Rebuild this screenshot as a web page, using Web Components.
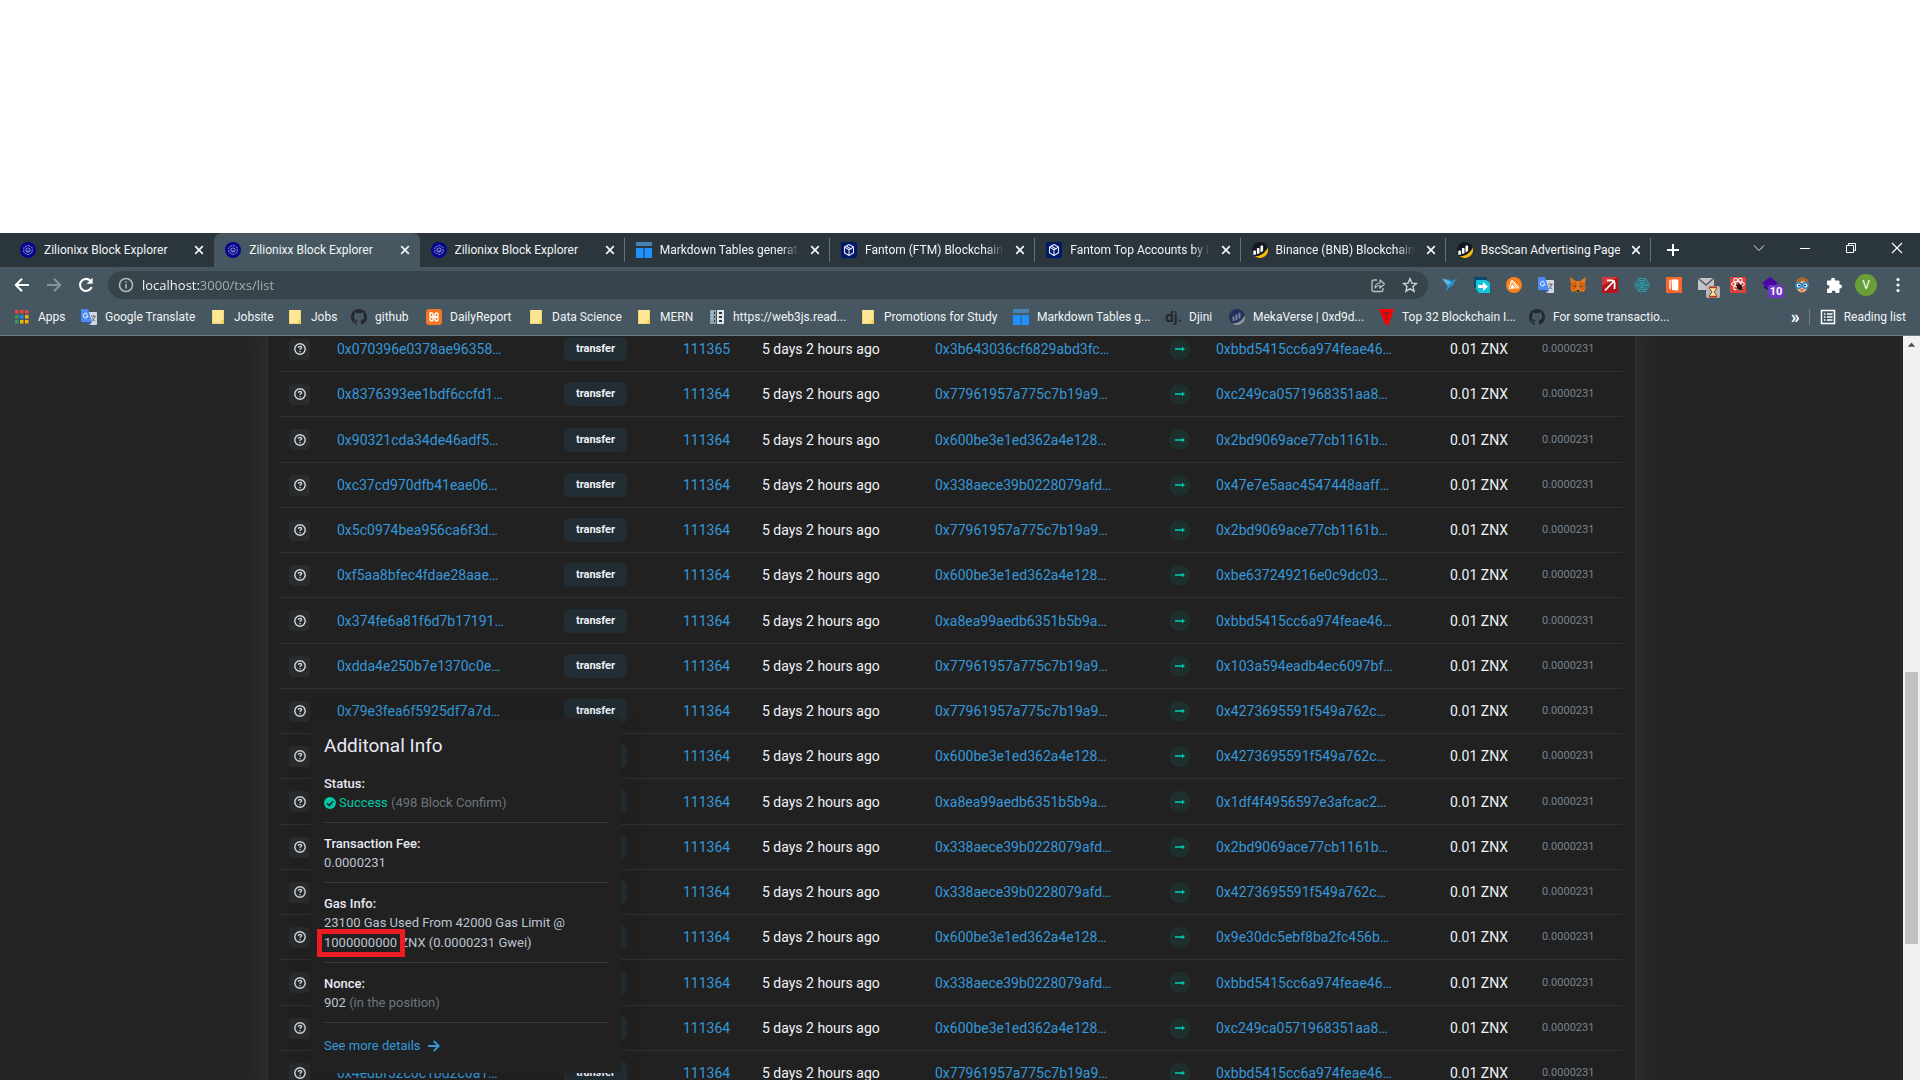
<!DOCTYPE html>
<html lang="en">
<head>
<meta charset="utf-8">
<title>Zilionixx Block Explorer</title>
<style>
  html, body { margin: 0; height: 100%; background: #fff; }
  body { overflow: hidden; font-family: Roboto, "Noto Sans", sans-serif; }
</style>
</head>
<body>
<browser-window></browser-window>
<script>
const ICONS = {
  zx: ['0 0 16 16', '<circle cx="8" cy="8" r="8" fill="#06068c"/><g fill="none" stroke="#9aa0d8" stroke-width=".9"><path d="M8 3.2l4.2 2.4v4.8L8 12.8l-4.200-2.400V5.600z" stroke-dasharray="2.400 .8"/><path d="M8 5.800l2 1.100v2.200l-2 1.100-2-1.100V6.900z"/><path d="M8 8v2.500"/></g>'],
  table: ['0 0 16 16', '<path fill="#4682b4" d="M0 0h16v4H0z"/><path fill="#1e90ff" d="M0 6h7.500v10H0zM8.500 6H16v10H8.500z"/>'],
  cube: ['0 0 16 16', '<rect width="16" height="16" rx="2" fill="#001868"/><g fill="none" stroke="#e4e8f6" stroke-width="1.100" stroke-linejoin="round"><path d="M8 2.500l4.500 2.600v5.600L8 13.500l-4.500-2.800V5.100z"/><path d="M3.500 5.100L8 7.800l4.500-2.700M8 7.800v5.700M5.500 4.200l5 3"/></g>'],
  bsc: ['0 0 16 16', '<circle cx="8" cy="8" r="8" fill="#15171f"/><path d="M15.700 5.800A8 8 0 0 1 2.800 14C9 14.500 12.500 11 15.700 5.800z" fill="#f0b90b"/><g fill="#fff"><path d="M1.300 12.400V9.200c0-.5.4-.8.800-.8h1c.5 0 .8.300.8.800v3.200c-.9.500-1.700.6-2.600 0z"/><path d="M4.900 12V6.800c0-.5.3-.8.800-.8h1c.5 0 .8.300.8.800v4.400c-.8.500-1.700.8-2.600.8z"/><path d="M8.500 10.600V4.400c0-.5.3-.8.800-.8h1c.5 0 .8.300.8.800v4.400c-.8.800-1.700 1.400-2.600 1.800z"/></g>'],
  meka: ['0 0 16 16', '<circle cx="8" cy="8" r="8" fill="#21325b"/><path d="M15.900 6.500A8 8 0 0 1 3.200 14.400C9.500 14.500 13 11.500 15.900 6.500z" fill="#979695"/><g fill="#75829d"><path d="M3.500 12V7.600h2V12zM6.500 11.500V5.600h2v5.200zM9.500 10V3.800h2v4.900z"/></g>'],
  close: ['0 0 10 10', '<path d="M1.200 1.200l7.600 7.600M8.800 1.200L1.200 8.800" stroke="#f2f4f5" stroke-width="1.700"/>'],
  plus: ['0 0 12 12', '<path d="M6 0v12M0 6h12" stroke="#fff" stroke-width="2"/>'],
  chevron: ['0 0 12 12', '<path d="M1 3.500l5 5 5-5" fill="none" stroke="#eee" stroke-width="1"/>'],
  min: ['0 0 12 12', '<path d="M1 6.500h10" stroke="#fff"/>'],
  restore: ['0 0 12 12', '<path d="M1.500 3.500h7v7h-7zM3.500 3.500v-2h7v7h-2" fill="none" stroke="#fff"/>'],
  winclose: ['0 0 12 12', '<path d="M1 1l10 10M11 1L1 11" stroke="#fff" stroke-width="1.100"/>'],
  back: ['0 0 16 16', '<path d="M15 8H2M8 1.800L1.800 8 8 14.200" fill="none" stroke="#fff" stroke-width="2"/>'],
  forward: ['0 0 16 16', '<path d="M1 8h13M8 1.800L14.200 8 8 14.200" fill="none" stroke="#87939a" stroke-width="2"/>'],
  reload: ['0 0 16 16', '<path d="M13.600 10.200A6 6 0 1 1 12.600 4" fill="none" stroke="#fff" stroke-width="2.100"/><path d="M14.600 .8v6H8.600z" fill="#fff"/>'],
  info: ['0 0 16 16', '<g fill="none" stroke="#b4bcc0" stroke-width="1.500"><circle cx="8" cy="8" r="6.500"/><path d="M8 7v4.500M8 4.300v1.500"/></g>'],
  share: ['0 0 16 16', '<path d="M7 3H4Q2 3 2 5v7.500q0 2 2 2h7q2 0 2-2V11" fill="none" stroke="#b9c0c4" stroke-width="1.300"/><path d="M5 11c.3-3.500 2-5 5-5V3l4.500 4-4.500 4V8.500C8 8.500 6.500 9 5 11z" fill="none" stroke="#b9c0c4" stroke-width="1.200" stroke-linejoin="round"/>'],
  star: ['0 0 16 16', '<path d="M8 1.800l1.900 4.300 4.600.4-3.500 3.100 1 4.600L8 11.800l-4 2.400 1-4.600L1.500 6.500l4.600-.4z" fill="none" stroke="#cfd4d7" stroke-width="1.400"/>'],
  bird: ['0 0 16 16', '<path d="M0 1.500l7 1.200 2.500 2L12 2.500h4l-3.500 1.800C12 8 9.500 10 7.500 10.500L4 14.500l1.500-6z" fill="#2f92cf"/><path d="M0 1.500l9.500 3.200L5.500 8.500z" fill="#5cb8e8"/>'],
  doc: ['0 0 16 16', '<path d="M0 0h13v11H0z" fill="#0a4a6b"/><path d="M2 3h10l4 3v10H5l-3-4z" fill="#10c5dc"/><path d="M4 8h5V5l5 4.500L9 14v-3H4z" fill="#fff"/>'],
  avast: ['0 0 16 16', '<circle cx="8" cy="8" r="8" fill="#f9801c"/><path d="M2.500 12l2.500-8.500q1-1 2 0L13 10q.5 1.500-1 1.500z" fill="#fff"/><path d="M3.500 12.500L6 6l4 6.500M6 4.500l6 7" fill="none" stroke="#f9801c" stroke-width=".9"/>'],
  gtrans: ['0 0 16 16', '<path d="M6 3h9q1 0 1 1v11q0 1-1 1H8.500z" fill="#d5d7da"/><path d="M1 0h6l4 13H1q-1 0-1-1V1q0-1 1-1z" fill="#4c8bf5"/><path d="M8 13h3l-2.400 3z" fill="#2b59c3"/><path d="M6.600 5.300A2.300 2.300 0 1 0 7 7H5" fill="none" stroke="#fff"/><path d="M10.200 7.300h4.600M12.500 6v1.300M11 12q2.500-2 2.800-4.500M11 9q1 2 3.300 3" fill="none" stroke="#6b7480"/>'],
  fox: ['0 0 16 16', '<path d="M0 0l6 4h4l6-4-1 7 .7 4-1.700 4-3.500-1-1.500 1.500H7L5.500 14 2 15 .3 11 1 7z" fill="#e2761b"/><path d="M1 7l5-3 1 5-3 4-3.700-2zM15 7l-5-3-1 5 3 4 3.700-2z" fill="#cd6116"/><path d="M4 8.500l2.200.6-.9 1.200zM12 8.500l-2.200.6.9 1.200z" fill="#23344a"/><path d="M6.500 13h3L9 15H7z" fill="#2b2b2b"/>'],
  pick: ['0 0 16 16', '<path d="M0 0h16v16H0z" fill="#b3151a"/><path d="M0 0h16L0 9z" fill="#d9353a"/><path d="M3 13.500l8.500-9M5 3.500q6-.500 7 .5 1 1.500.5 8" fill="none" stroke="#fff" stroke-width="1.800"/>'],
  web: ['0 0 16 16', '<g fill="none" stroke="#2a9aa8" stroke-width="1"><path d="M4.500 1.500h7L15.500 8l-4 6.500h-7L.5 8z"/><path d="M5.500 3.500h5L13.200 8l-2.700 4.500h-5L2.800 8z"/><path d="M6.500 5.500h3L11 8l-1.500 2.500h-3L5 8z"/><path d="M4.500 1.500l7 13M11.500 1.500l-7 13M.5 8h15"/></g>'],
  cards: ['0 0 16 16', '<path d="M0 0h16v16H0z" fill="#f7682b"/><path d="M3 3.500l2-1v10l-2-1z" fill="#fcd2bf"/><path d="M5.500 2.500h6.800v11l-6.300-.5z" fill="#fff"/>'],
  mail: ['0 0 16 16', '<path d="M0 1h16v12H0z" fill="#c3c5c7"/><path d="M0 1l8 7 8-7" fill="none" stroke="#4f5a60" stroke-width="1.500"/>'],
  hourglass: ['0 0 14 12', '<rect width="14" height="12" rx="2" fill="#b7b7b7"/><path d="M3.500 1h7v1.500L8 6l2.500 3.500V11h-7V9.500L6 6 3.500 2.500z" fill="#ffe9a0" stroke="#6b2a14" stroke-width=".8"/><path d="M3 .8h8v1.400H3zM3 9.800h8v1.400H3z" fill="#c0391c"/>'],
  bug: ['0 0 16 16', '<path d="M0 0h16v16H0z" fill="#d9433b"/><g fill="none" stroke="#fff" stroke-width="1"><ellipse cx="8" cy="7" rx="6.500" ry="2.500"/><ellipse cx="8" cy="7" rx="6.500" ry="2.500" transform="rotate(60 8 7)"/><ellipse cx="8" cy="7" rx="6.500" ry="2.500" transform="rotate(120 8 7)"/></g><ellipse cx="9.500" cy="10" rx="2.500" ry="3.300" fill="#2a1513" transform="rotate(-35 9.500 10)"/><path d="M6 8l7 5M6.500 12.500l6-5" stroke="#2a1513"/>'],
  purple: ['0 0 16 16', '<path d="M8 0l8 6-8 6-8-6z" fill="#4a06a8"/><path d="M2 8l6 4.500L14 8v3l-6 3-6-3z" fill="#3a0688"/>'],
  face: ['0 0 16 16', '<path d="M2 8q-1-6 5-7.500Q14 0 14.500 6v4H2z" fill="#a8692c"/><ellipse cx="8" cy="9.500" rx="5.500" ry="6" fill="#f0b07a"/><path d="M2 6q5-1 8-3.500Q12 6 14.500 6L13 1.500 7 .5 3 2z" fill="#a8692c"/><circle cx="4.600" cy="8.500" r="2.700" fill="#fff" stroke="#1e88d2" stroke-width="1.500"/><circle cx="11.400" cy="8.500" r="2.700" fill="#fff" stroke="#1e88d2" stroke-width="1.500"/><circle cx="5" cy="8.500" r="1" fill="#223"/><circle cx="11" cy="8.500" r="1" fill="#223"/><path d="M6.500 13h3" stroke="#a33"/>'],
  puzzle: ['0 0 16 16', '<path d="M5 2.800a2 2 0 0 1 4 0V3.500h3.500q1 0 1 1V7.500h.5a2 2 0 0 1 0 4h-.5V15q0 1-1 1H9.500v-.6a1.900 1.900 0 0 0-3.800 0V16H2q-1 0-1-1v-3.300h.6a1.900 1.900 0 0 0 0-3.800H1V4.500q0-1 1-1h3z" fill="#fff"/>'],
  dots: ['0 0 16 16', '<g fill="#fff"><circle cx="8" cy="2.500" r="1.600"/><circle cx="8" cy="8" r="1.600"/><circle cx="8" cy="13.500" r="1.600"/></g>'],
  apps: ['0 0 16 16', '<path fill="#ee4236" d="M1 1h3.500v3.500H1zM6 1h3.500v3.500H6zM11 1h3.500v3.500H11z"/><path fill="#2f9e51" d="M1 6h3.500v3.500H1zM1 11h3.500v3.500H1z"/><path fill="#1e88ee" d="M6 6h3.500v3.500H6z"/><path fill="#f5b400" d="M11 6h3.500v3.500H11zM6 11h3.500v3.500H6zM11 11h3.500v3.500H11z"/>'],
  folder: ['0 0 16 16', '<path d="M2 1h12v14H2z" fill="#ffe694"/><path d="M2 1h1v14H2zM2 14h12v1H2zM13 1h1v10h-1z" fill="#f3d573"/><path d="M11.500 11H14v4h-2.500z" fill="#f4cd4d"/>'],
  github: ['0 0 16 16', '<path d="M8 0C3.580 0 0 3.580 0 8c0 3.540 2.290 6.530 5.470 7.590.4.070.55-.17.55-.38v-1.490c-2.230.48-2.690-.94-2.690-.94-.36-.92-.89-1.170-.89-1.170-.73-.5.050-.49.050-.49.810.060 1.230.83 1.230.83.720 1.230 1.880.87 2.340.67.070-.52.280-.87.510-1.070-1.780-.2-3.640-.89-3.640-3.950 0-.87.310-1.590.82-2.150-.08-.2-.36-1.020.08-2.120 0 0 .67-.21 2.200.82A7.600 7.600 0 0 1 8 3.900c.68 0 1.360.09 2 .27 1.530-1.040 2.200-.82 2.200-.82.440 1.100.16 1.920.08 2.120.51.56.82 1.270.82 2.150 0 3.070-1.870 3.750-3.650 3.950.29.25.54.73.54 1.480v2.160c0 .21.150.46.550.38A8 8 0 0 0 16 8c0-4.420-3.580-8-8-8z" fill="#24292e"/>'],
  xampp: ['0 0 16 16', '<rect width="16" height="16" rx="3" fill="#f37623"/><path d="M4 4v2.500Q4 8 5.500 8h5Q12 8 12 6.500V5q0-1-1.500-1T9 5.500v5q0 1.500 1.500 1.500T12 11V9.500Q12 8 10.500 8h-5Q4 8 4 9.500V11q0 1 1.500 1T7 10.500v-5Q7 4 5.500 4H4z" fill="none" stroke="#fff" stroke-width="1.400"/>'],
  docs: ['0 0 16 16', '<path d="M1 1h6v14H1z" fill="#8ca1af"/><path d="M8 1h7v14H8z" fill="#e4e8ea"/><path d="M2 3h2M2 6h2M2 9h2" stroke="#dde3e7"/><path d="M10 4h3M10 8h3M10 12h3M5 4h1M5 8h1M5 12h1" stroke="#2a3337" stroke-width="1.800"/>'],
  tri: ['0 0 16 16', '<path d="M1 0h15l-5.500 16h-3z" fill="#f00"/><path d="M5 4h7M8.500 4v7" stroke="#6f2a30" stroke-width="1.300"/>'],
  list: ['0 0 16 16', '<path d="M1.500 1.500h13v13h-13z" fill="none" stroke="#fff" stroke-width="1.500"/><path d="M4 5h1.500M7 5h5.500M4 8h1.500M7 8h5.500M4 11h1.500M7 11h5.500" stroke="#fff" stroke-width="1.600"/>'],
  question: ['0 0 12 12', '<circle cx="6" cy="6" r="5.200" fill="none" stroke="#d4dce1" stroke-width="1.400"/><path d="M4.300 4.800q.2-1.500 1.800-1.500 1.600.1 1.600 1.300 0 .9-1.700 1.700v.5M6 8v1.300" fill="none" stroke="#d4dce1" stroke-width="1.300"/>'],
  arrow: ['0 0 12 12', '<path d="M1 6h8" stroke="#00c9a7" stroke-width="1.600"/><path d="M8 3.700L11 6 8 8.300z" fill="#00c9a7"/>'],
  check: ['0 0 12 12', '<circle cx="6" cy="6" r="6" fill="#00c9a7"/><path d="M3 6.300l2.200 2.200L9.200 4" fill="none" stroke="#212121" stroke-width="1.600"/>'],
  more: ['0 0 12 12', '<path d="M0 6h10.500M5.800 1l5 5-5 5" fill="none" stroke="#3498db" stroke-width="1.800"/>'],
  up: ['0 0 16 16', '<path d="M4.500 10L8 6l3.500 4z" fill="#505050"/>']
};

class XIcon extends HTMLElement {
  connectedCallback() {
    const [box, body] = ICONS[this.getAttribute('name')];
    const size = this.getAttribute('size') || 16;
    this.attachShadow({ mode: 'open' }).innerHTML =
      `<style>:host{display:block;flex:none;width:${size}px}svg{display:block;width:100%}</style>
       <svg viewBox="${box}" aria-hidden="true">${body}</svg>`;
  }
}
customElements.define('x-icon', XIcon);

class BrowserTab extends HTMLElement {
  connectedCallback() {
    this.attachShadow({ mode: 'open' }).innerHTML = `
      <style>
        :host { display: flex; align-items: center; gap: 8px; min-width: 0; height: 34px; padding: 0 7px 0 11px; box-sizing: border-box; color: #f2f4f5; font-size: 12px; line-height: 16px;
          background: linear-gradient(#657279, #657279) right center / 1px 24px no-repeat; }
        :host([plain]) { background: none; }
        :host([active]) { background: #465761; border-radius: 8px 8px 0 0; }
        span { flex: 1; min-width: 0; overflow: hidden; white-space: nowrap; }
        :host([fade]) span { -webkit-mask-image: linear-gradient(to right, #000 calc(100% - 18px), transparent); mask-image: linear-gradient(to right, #000 calc(100% - 18px), transparent); }
        button { all: unset; display: grid; place-items: center; width: 16px; height: 16px; }
      </style>
      <x-icon name="${this.getAttribute('icon')}"></x-icon><span><slot></slot></span>
      <button aria-label="Close tab"><x-icon name="close" size="10"></x-icon></button>`;
  }
}
customElements.define('browser-tab', BrowserTab);

class TabStrip extends HTMLElement {
  connectedCallback() {
    this.attachShadow({ mode: 'open' }).innerHTML = `
      <style>
        :host { display: flex; height: 34px; background: #2b363c; padding-left: 9px; }
        .tabs { flex: 1; display: grid; grid-template-columns: repeat(8, minmax(0, 1fr)); }
        button { all: unset; display: grid; place-items: center; width: 44px; height: 34px; }
        .caption { display: flex; height: 30px; margin-left: 41px; }
        .caption button { width: 46px; height: 30px; }
      </style>
      <div class="tabs">
        <browser-tab icon="zx" plain>Zilionixx Block Explorer</browser-tab>
        <browser-tab icon="zx" active>Zilionixx Block Explorer</browser-tab>
        <browser-tab icon="zx">Zilionixx Block Explorer</browser-tab>
        <browser-tab icon="table" fade>Markdown Tables generator</browser-tab>
        <browser-tab icon="cube" fade>Fantom (FTM) Blockchain Explorer</browser-tab>
        <browser-tab icon="cube" fade>Fantom Top Accounts by FTM</browser-tab>
        <browser-tab icon="bsc" fade>Binance (BNB) Blockchain Explorer</browser-tab>
        <browser-tab icon="bsc">BscScan Advertising Page</browser-tab>
      </div>
      <button aria-label="New tab"><x-icon name="plus" size="12"></x-icon></button>
      <div class="caption">
        <button aria-label="Search tabs"><x-icon name="chevron" size="12"></x-icon></button>
        <button aria-label="Minimize"><x-icon name="min" size="12"></x-icon></button>
        <button aria-label="Restore"><x-icon name="restore" size="12"></x-icon></button>
        <button aria-label="Close"><x-icon name="winclose" size="12"></x-icon></button>
      </div>`;
  }
}
customElements.define('tab-strip', TabStrip);

class ToolBar extends HTMLElement {
  connectedCallback() {
    const ext = ['bird', 'doc', 'avast', 'gtrans', 'fox', 'pick', 'web', 'cards', 'mail', 'bug', 'purple', 'face', 'puzzle'];
    const badge = { mail: '<x-icon class="hg" name="hourglass" size="14"></x-icon>', purple: '<b>10</b>' };
    this.attachShadow({ mode: 'open' }).innerHTML = `
      <style>
        :host { display: flex; align-items: center; height: 36px; padding: 0 6px; }
        button { all: unset; position: relative; display: grid; place-items: center; width: 32px; height: 28px; flex: none; }
        .url { flex: 1; display: flex; align-items: center; height: 28px; margin: 0 6px; border-radius: 14px; background: #38444b; padding: 0 2px 0 10px; }
        .url input { flex: 1; min-width: 0; margin: 0 8px; padding: 0; border: 0; outline: 0; height: 20px; font: 13px/20px "Open Sans", sans-serif;
          background: linear-gradient(to right, #fff 58px, #aab2b6 58px); -webkit-background-clip: text; background-clip: text; -webkit-text-fill-color: transparent; }
        b { position: absolute; left: 14px; top: 14px; width: 16px; height: 13px; border-radius: 2px; background: #6f35c4; color: #fff; font: 700 11px/13px Roboto, sans-serif; text-align: center; }
        .hg { position: absolute; left: 16px; top: 15px; }
        .avatar span { width: 22px; height: 22px; border-radius: 50%; background: #689f38; color: #fff; font: 12px/22px Roboto, sans-serif; text-align: center; }
      </style>
      <button aria-label="Back"><x-icon name="back"></x-icon></button>
      <button aria-label="Forward"><x-icon name="forward"></x-icon></button>
      <button aria-label="Reload"><x-icon name="reload"></x-icon></button>
      <div class="url"><x-icon name="info"></x-icon><input aria-label="Address" value="localhost:3000/txs/list">
        <button aria-label="Share"><x-icon name="share"></x-icon></button>
        <button aria-label="Bookmark"><x-icon name="star"></x-icon></button></div>
      ${ext.map(n => `<button aria-label="${n}"><x-icon name="${n}"></x-icon>${badge[n] || ''}</button>`).join('')}
      <button class="avatar" aria-label="Profile"><span>V</span></button>
      <button aria-label="Menu"><x-icon name="dots"></x-icon></button>`;
  }
}
customElements.define('tool-bar', ToolBar);

class BookmarkItem extends HTMLElement {
  connectedCallback() {
    const icon = this.getAttribute('icon');
    this.attachShadow({ mode: 'open' }).innerHTML = `
      <style>
        :host { display: block; min-width: 0; }
        a { display: flex; align-items: center; gap: 8px; color: #f2f4f5; text-decoration: none; font-size: 12px; line-height: 16px; white-space: nowrap; }
        i { width: 16px; font: 700 14px/16px Inter, sans-serif; color: #24292e; }
      </style>
      <a href="#">${icon === 'dj' ? '<i>dj.</i>' : `<x-icon name="${icon}"></x-icon>`}<span><slot></slot></span></a>`;
  }
}
customElements.define('bookmark-item', BookmarkItem);

class BookmarksBar extends HTMLElement {
  connectedCallback() {
    const marks = [['apps', 'Apps', 67], ['gtrans', 'Google Translate', 129], ['folder', 'Jobsite', 77], ['folder', 'Jobs', 64], ['github', 'github', 75], ['xampp', 'DailyReport', 102], ['folder', 'Data Science', 108], ['folder', 'MERN', 73], ['docs', 'https://web3js.read...', 151], ['folder', 'Promotions for Study', 153], ['table', 'Markdown Tables g...', 152], ['dj', 'Djini', 64], ['meka', 'MekaVerse | 0xd9d...', 149], ['tri', 'Top 32 Blockchain I...', 151], ['github', 'For some transactio...', 140]];
    this.attachShadow({ mode: 'open' }).innerHTML = `
      <style>
        :host { display: flex; align-items: center; height: 28px; padding: 0 14px 4px; border-bottom: 1px solid #6d7c84; }
        nav { flex: 1; display: grid; grid-template-columns: ${marks.map(m => m[2] + 'px').join(' ')}; }
        button { all: unset; width: 18px; color: #fff; font: 700 18px/16px Roboto, sans-serif; }
        hr { width: 1px; height: 16px; border: 0; margin: 0 10px 0 0; background: #71808a; }
      </style>
      <nav aria-label="Bookmarks">${marks.map(m => `<bookmark-item icon="${m[0]}">${m[1]}</bookmark-item>`).join('')}</nav>
      <button aria-label="More bookmarks">»</button><hr>
      <bookmark-item icon="list">Reading list</bookmark-item>`;
  }
}
customElements.define('bookmarks-bar', BookmarksBar);

const A = '0x77961957a775c7b19a9…', B = '0x600be3e1ed362a4e128…', C = '0x338aece39b0228079afd…', D = '0xa8ea99aedb6351b5b9a…';
const P = '0xbbd5415cc6a974feae46…', Q = '0xc249ca0571968351aa8…', R = '0x2bd9069ace77cb1161b…', S = '0x4273695591f549a762c…';
const ROWS = [
  ['0x070396e0378ae96358…', 111365, '0x3b643036cf6829abd3fc…', P],
  ['0x8376393ee1bdf6ccfd1…', 111364, A, Q],
  ['0x90321cda34de46adf5…', 111364, B, R],
  ['0xc37cd970dfb41eae06…', 111364, C, '0x47e7e5aac4547448aaff…'],
  ['0x5c0974bea956ca6f3d…', 111364, A, R],
  ['0xf5aa8bfec4fdae28aae…', 111364, B, '0xbe637249216e0c9dc03…'],
  ['0x374fe6a81f6d7b17191…', 111364, D, P],
  ['0xdda4e250b7e1370c0e…', 111364, A, '0x103a594eadb4ec6097bf…'],
  ['0x79e3fea6f5925df7a7d…', 111364, A, S],
  ['', 111364, B, S],
  ['', 111364, D, '0x1df4f4956597e3afcac2…'],
  ['', 111364, C, R],
  ['', 111364, C, S],
  ['', 111364, B, '0x9e30dc5ebf8ba2fc456b…'],
  ['', 111364, C, P],
  ['', 111364, B, Q],
  ['0x4edbf52c0c1bd2c0a1…', 111364, A, P]
];

class TxTable extends HTMLElement {
  connectedCallback() {
    const cols = [57, 227, 119, 79, 173, 234, 47, 234, 92, 81];
    this.attachShadow({ mode: 'open' }).innerHTML = `
      <style>
        :host { display: block; }
        table { width: 100%; table-layout: fixed; border-collapse: separate; border-spacing: 0; }
        td { height: 44px; padding: 0; border-bottom: 1px solid #303030; white-space: nowrap; font-size: 14px; line-height: 20px; color: #f0f3f8; }
        tr:nth-child(4n+3) td { height: 45px; }
        td:first-child { padding-left: 9px; }
        a { color: #3498db; text-decoration: none; }
        button { all: unset; display: grid; place-items: center; width: 21px; height: 21px; border-radius: 4px; background: #292b2c; }
        .badge { display: inline-block; padding: 4px 12px; border-radius: 5px; background: #222c33; font-weight: 700; font-size: 11px; line-height: 16px; }
        .dir { display: grid; place-items: center; width: 21px; height: 21px; border-radius: 50%; background: #1e302d; }
        .fee { font-size: 11px; color: #77838f; }
      </style>
      <table><colgroup>${cols.map(c => `<col style="width:${c}px">`).join('')}</colgroup><tbody>
      ${ROWS.map(r => `<tr><td><button aria-label="Additional info"><x-icon name="question" size="12"></x-icon></button></td>
        <td><a href="#">${r[0]}</a></td><td><span class="badge">transfer</span></td><td><a href="#">${r[1]}</a></td>
        <td>5 days 2 hours ago</td><td><a href="#">${r[2]}</a></td><td><div class="dir"><x-icon name="arrow" size="12"></x-icon></div></td>
        <td><a href="#">${r[3]}</a></td><td>0.01 ZNX</td><td class="fee">0.0000231</td></tr>`).join('')}
      </tbody></table>`;
  }
}
customElements.define('tx-table', TxTable);

class InfoPopover extends HTMLElement {
  connectedCallback() {
    this.attachShadow({ mode: 'open' }).innerHTML = `
      <style>
        :host { display: block; box-sizing: border-box; width: 310px; padding: 13px; border-radius: 5px; background: #212121; color: #bdc5d1; font-size: 13px; line-height: 19px; box-shadow: 0 0 24px rgba(0,0,0,.12); }
        h3 { margin: 0 0 13px; font-weight: 400; font-size: 19px; line-height: 30px; color: #e7eaf3; }
        section { margin-bottom: 11px; padding-bottom: 9px; border-bottom: 1px solid #3a3a3a; }
        strong { display: block; font-weight: 500; color: #e7eaf3; }
        p { margin: 0; line-height: 20px; }
        .row { display: flex; align-items: center; gap: 3px; }
        .ok { color: #00c9a7; }
        .muted { color: #6c757d; }
        .mark { position: relative; }
        .mark::after { content: ""; position: absolute; inset: -6px -8px -7px -7px; border: 5px solid #ed1c24; }
        a { display: flex; align-items: center; gap: 7px; padding: 2px 0 5px; color: #3498db; text-decoration: none; }
      </style>
      <h3>Additonal Info</h3>
      <section><strong>Status:</strong><p class="row"><x-icon name="check" size="12"></x-icon><span class="ok">Success <span class="muted">(498 Block Confirm)</span></span></p></section>
      <section><strong>Transaction Fee:</strong><p>0.0000231</p></section>
      <section><strong>Gas Info:</strong><p>23100 Gas Used From 42000 Gas Limit @ <span class="mark">1000000000</span> ZNX (0.0000231 Gwei)</p></section>
      <section><strong>Nonce:</strong><p>902 <span class="muted">(in the position)</span></p></section>
      <a href="#">See more details <x-icon name="more" size="12"></x-icon></a>`;
  }
}
customElements.define('info-popover', InfoPopover);

class PageScrollbar extends HTMLElement {
  connectedCallback() {
    this.attachShadow({ mode: 'open' }).innerHTML = `
      <style>
        :host { display: flex; flex-direction: column; width: 17px; background: #f1f1f1; }
        .thumb { height: 272px; margin: 319px 2px 0; background: #c1c1c1; }
      </style>
      <x-icon name="up" size="17"></x-icon><div class="thumb"></div>`;
  }
}
customElements.define('page-scrollbar', PageScrollbar);

class BrowserWindow extends HTMLElement {
  connectedCallback() {
    this.attachShadow({ mode: 'open' }).innerHTML = `
      <style>
        :host { display: flex; flex-direction: column; box-sizing: border-box; height: 100vh; padding-top: 233px; }
        .chrome { flex: none; background: #465761; }
        .view { flex: 1; min-height: 0; display: flex; }
        main { flex: 1; min-width: 0; overflow: hidden; background: #252525; }
        .card { position: relative; box-sizing: border-box; max-width: 1369px; margin: -9px auto 0; padding: 0 12px; border: solid #303030; border-width: 0 1px; background: #212121; box-shadow: 0 0 24px rgba(140,152,164,.13); }
        info-popover { position: absolute; left: 43px; top: 391px; }
      </style>
      <div class="chrome"><tab-strip></tab-strip><tool-bar></tool-bar><bookmarks-bar></bookmarks-bar></div>
      <div class="view"><main><div class="card"><tx-table></tx-table><info-popover></info-popover></div></main><page-scrollbar></page-scrollbar></div>`;
  }
}
customElements.define('browser-window', BrowserWindow);
</script>
</body>
</html>
